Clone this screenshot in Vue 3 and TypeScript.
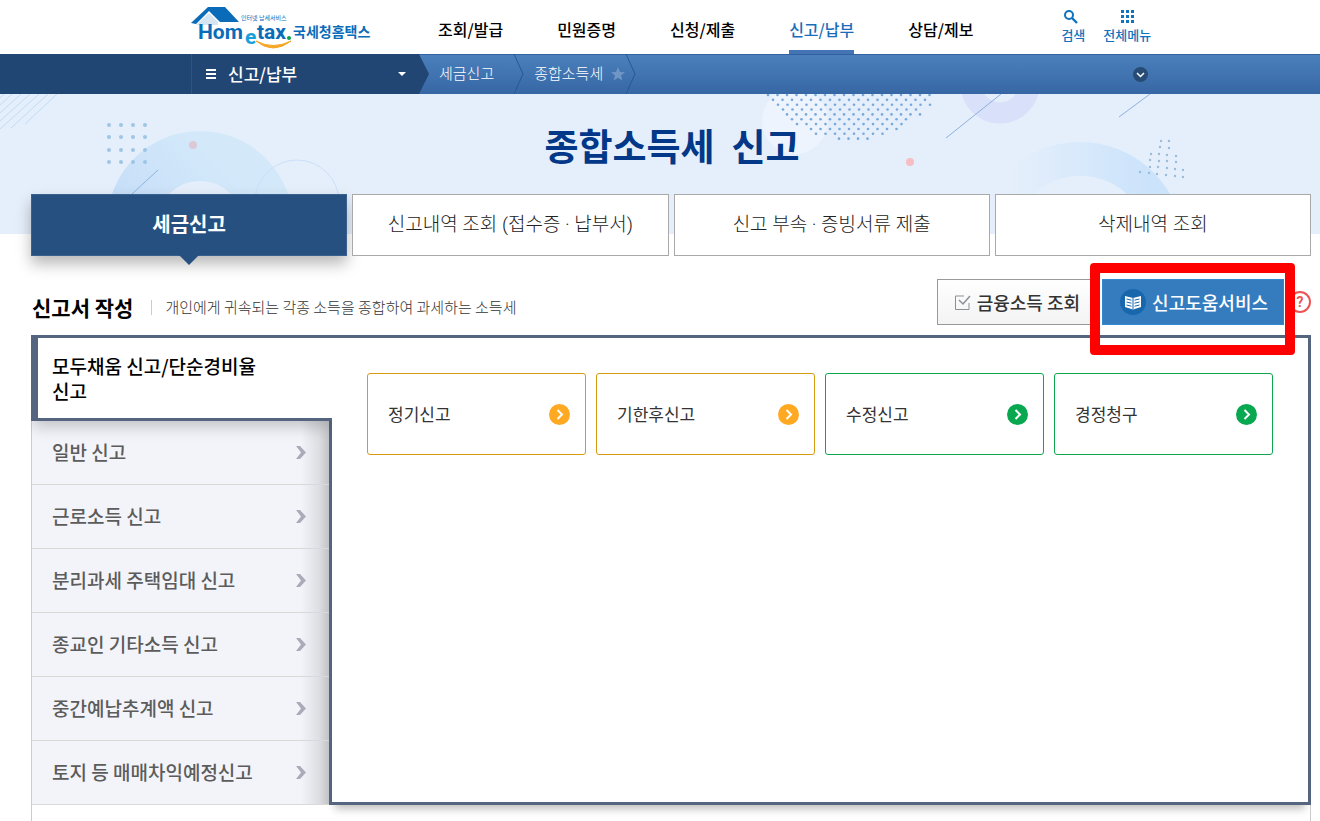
<script setup lang="ts">
interface Card {
  label: string
  tone: 'amber' | 'green'
}

interface Dot {
  x: number
  y: number
}

const menus: string[] = ['조회/발급', '민원증명', '신청/제출', '신고/납부', '상담/제보']
const activeMenu = '신고/납부'

const tabs: string[] = ['세금신고', '신고내역 조회 (접수증 · 납부서)', '신고 부속 · 증빙서류 제출', '삭제내역 조회']

const sideItems: string[] = [
  '일반 신고',
  '근로소득 신고',
  '분리과세 주택임대 신고',
  '종교인 기타소득 신고',
  '중간예납추계액 신고',
  '토지 등 매매차익예정신고',
]

const cards: Card[] = [
  { label: '정기신고', tone: 'amber' },
  { label: '기한후신고', tone: 'amber' },
  { label: '수정신고', tone: 'green' },
  { label: '경정청구', tone: 'green' },
]

const gridDots: Dot[] = []
for (const y of [31, 43, 56, 68]) {
  for (const x of [109, 121, 133, 145]) gridDots.push({ x, y })
}

// Each row of the halftone triangle: first and last dot position.
const halftoneRows: [number, number][] = [
  [768, 930], [773, 926], [778, 930], [783, 925], [787, 920],
  [792, 911], [797, 907], [811, 897], [816, 883], [839, 869],
]
const halftone: Dot[] = halftoneRows.flatMap(([from, to], row) => {
  const out: Dot[] = []
  for (let x = from; x <= to; x += 9.5) out.push({ x, y: 1 + row * 4.85 })
  return out
})

const spray: Dot[] = [
  [1161, 47], [1169, 47], [1160, 53], [1169, 54], [1151, 60], [1159, 60], [1167, 61], [1176, 62],
  [1150, 66], [1159, 67], [1167, 67], [1176, 68], [1150, 73], [1158, 73], [1167, 74], [1175, 75],
  [1183, 76], [1140, 78], [1149, 79], [1157, 80], [1166, 81], [1175, 82], [1183, 83],
].map(([x, y]) => ({ x, y }))
</script>

<template>
  <div class="page">
    <header class="top">
      <a class="logo" href="#" aria-label="Hometax 국세청홈택스">
        <svg width="182" height="52" viewBox="0 0 182 52">
          <path d="M5 25L18 13L27 22V25Z" fill="#d5e6f2" />
          <path d="M0 23L17 7H34L48 22H29L18 11L5 24Z" fill="#0a6cb8" />
          <text class="brand" y="39"><tspan x="7">Hom</tspan><tspan class="small-e" x="54" y="44">e</tspan><tspan x="66" y="39">tax</tspan></text>
          <circle cx="98" cy="38" r="2" fill="#0ba14b" />
          <path d="M65 41Q82 55 100 41Q82 50 65 41Z" fill="#f5a623" stroke="#f5a623" stroke-width="1" />
          <text class="tagline" x="50" y="20">인터넷 납세서비스</text>
          <text class="korean" x="102" y="37">국세청홈택스</text>
        </svg>
      </a>
      <nav class="menus">
        <a v-for="m in menus" :key="m" href="#" :class="{ on: m === activeMenu }">{{ m }}</a>
      </nav>
      <div class="tools">
        <button type="button">
          <svg width="20" height="16" viewBox="0 0 20 16" fill="none" stroke="#0f73bd">
            <circle cx="6" cy="6" r="4" stroke-width="2" />
            <path d="M9 9L14 14" stroke-width="2.4" />
          </svg>
          검색
        </button>
        <button type="button">
          <svg width="16" height="16" viewBox="0 0 16 16" fill="#0f73bd">
            <template v-for="r in 3" :key="r">
              <rect v-for="c in 3" :key="c" :x="c * 5 - 3" :y="r * 5 - 4" width="3" height="3" />
            </template>
          </svg>
          전체메뉴
        </button>
      </div>
    </header>

    <div class="bar">
      <button type="button" class="section">
        <svg width="10" height="12" viewBox="0 0 10 12" fill="#fff">
          <path d="M0 1h10v2H0zM0 5h10v2H0zM0 9h10v2H0z" />
        </svg>
        <span>신고/납부</span>
        <svg width="8" height="4" viewBox="0 0 8 4"><path d="M0 0h8L4 4z" fill="#fff" /></svg>
      </button>
      <a class="crumb" href="#">세금신고</a>
      <svg class="sep" width="12" height="40" viewBox="0 0 12 40"><path d="M1 0L10 20L1 40" /></svg>
      <a class="crumb" href="#">종합소득세</a>
      <svg class="star" width="14" height="14" viewBox="0 0 14 14">
        <path d="M7 0L9 5L14 5.300L10 8.500L11.400 13.500L7 10.700L2.600 13.500L4 8.500L0 5.300L5 5Z" fill="#7096c6" />
      </svg>
      <svg class="sep" width="12" height="40" viewBox="0 0 12 40"><path d="M1 0L10 20L1 40" /></svg>
      <button type="button" class="expand" aria-label="펼치기">
        <svg width="15" height="15" viewBox="0 0 15 15">
          <circle cx="7.500" cy="7.500" r="7.500" fill="#284b76" />
          <path d="M4 6L7.500 9.500L11 6" fill="none" stroke="#fff" stroke-width="1.500" />
        </svg>
      </button>
    </div>

    <section class="banner">
      <svg class="art" width="1320" height="140" viewBox="0 0 1320 140" aria-hidden="true">
        <defs>
          <linearGradient id="ringLeft" x1="0" y1="0.600" x2="0.600" y2="0">
            <stop offset="0" stop-color="#c4dcf8" />
            <stop offset="1" stop-color="#d3e9fa" />
          </linearGradient>
          <linearGradient id="ringRight" x1="0" y1="0" x2="1" y2="0">
            <stop offset="0.100" stop-color="#cbe3fb" stop-opacity="0" />
            <stop offset="0.900" stop-color="#cbe3fb" />
          </linearGradient>
        </defs>
        <path d="M57 0L25 30M48 0L11 34M39 0L0 35M30 0L0 27M21 0L0 19M12 0L0 11M4 0L0 4" stroke="#bedcf5" fill="none" />
        <circle cx="200" cy="130" r="68" fill="none" stroke="url(#ringLeft)" stroke-width="50" />
        <circle v-for="(d, i) in gridDots" :key="'g' + i" :cx="d.x" :cy="d.y" r="2" fill="#9dc6e4" />
        <circle cx="193" cy="51" r="4" fill="#dcc8d6" />
        <path d="M132 100L158 76" stroke="#8cb5e2" />
        <circle cx="297" cy="108" r="42" fill="none" stroke="#cbdff8" />
        <circle cx="795" cy="27" r="33" fill="#edf4fd" />
        <circle v-for="(d, i) in halftone" :key="'h' + i" :cx="d.x" :cy="d.y" r="1.300" fill="#79a8da" />
        <circle cx="1000" cy="-10" r="29" fill="none" stroke="#d9e0f9" stroke-width="21" />
        <path d="M946 44L1001 0M1119 23L1150 0" stroke="#8bb1e2" />
        <circle cx="910" cy="68" r="4" fill="#f6bdc2" />
        <circle cx="1080" cy="152" r="87" fill="none" stroke="url(#ringRight)" stroke-width="34" />
        <circle v-for="(d, i) in spray" :key="'s' + i" :cx="d.x" :cy="d.y" r="1.200" fill="#9abbdc" />
      </svg>
      <h1>종합소득세&nbsp; 신고</h1>
    </section>

    <main>
      <nav class="tabs">
        <a v-for="(t, i) in tabs" :key="t" href="#" :class="{ on: i === 0 }">{{ t }}</a>
      </nav>

      <div class="heading">
        <h2>신고서 작성</h2>
        <p>개인에게 귀속되는 각종 소득을 종합하여 과세하는 소득세</p>
        <div class="actions">
          <button type="button" class="income">
            <svg width="17" height="17" viewBox="0 0 17 17" fill="none" stroke="#8b8f98">
              <path d="M10 2H1.500V15.500H15V9" />
              <path d="M5 6L9 10L16 2" stroke-width="1.500" />
            </svg>
            금융소득 조회
          </button>
          <div class="marked">
            <button type="button" class="assist">
              <svg width="26" height="26" viewBox="0 0 26 26">
                <circle cx="13" cy="13" r="13" fill="#1867ad" />
                <path d="M5 7L13 9L21 7V18L13 20.500L5 18Z" fill="#fff" />
                <path d="M13 9V20M6.500 10L11.500 11.200M6.500 13L11.500 14.200M6.500 16L11.500 17.200M19.500 10L14.500 11.200M19.500 13L14.500 14.200M19.500 16L14.500 17.200" stroke="#1867ad" fill="none" />
              </svg>
              신고도움서비스
            </button>
          </div>
          <button type="button" class="help" aria-label="도움말">?</button>
        </div>
      </div>

      <div class="board">
        <nav class="side">
          <a class="current" href="#">모두채움 신고/단순경비율 신고</a>
          <a v-for="s in sideItems" :key="s" class="item" href="#">
            <span>{{ s }}</span>
            <svg width="12" height="13" viewBox="0 0 12 13">
              <path d="M1 0H5L11 6.500L5 13H1L6 6.500Z" fill="#a9abb9" />
            </svg>
          </a>
        </nav>
        <section class="panel">
          <a v-for="c in cards" :key="c.label" href="#" class="card" :class="c.tone">
            <span>{{ c.label }}</span>
            <svg width="21" height="21" viewBox="0 0 21 21">
              <circle cx="10.500" cy="10.500" r="10.500" fill="currentColor" />
              <path d="M8.500 6L13 10.500L8.500 15" fill="none" stroke="#fff" stroke-width="2" />
            </svg>
          </a>
        </section>
      </div>
      <div class="tail"></div>
    </main>
  </div>
</template>

<style>
body {
  margin: 0;
  background: #fff;
}
</style>

<style scoped>
.page {
  display: flex;
  flex-direction: column;
  min-height: 100vh;
  overflow: hidden;
  font-family: "Noto Sans CJK KR", "Noto Sans", sans-serif;
  color: #000;
}

a {
  color: inherit;
  text-decoration: none;
}

button {
  padding: 0;
  border: 0;
  background: none;
  font-family: inherit;
  cursor: pointer;
}

svg {
  display: block;
  flex: none;
}

/* Top navigation */
.top {
  display: flex;
  height: 54px;
  padding-left: 191px;
}

.logo {
  width: 247px;
}

.brand {
  font-family: Roboto, sans-serif;
  font-size: 21px;
  font-weight: 700;
  fill: #0a6cb8;
}

.small-e {
  fill: #16a0dd;
}

.tagline {
  font-size: 6px;
  fill: #0a6cb8;
}

.korean {
  font-size: 14px;
  font-weight: 700;
  fill: #0a6cb8;
}

.menus {
  display: flex;
  gap: 54px;
}

.menus a {
  height: 50px;
  font-size: 16px;
  font-weight: 500;
  line-height: 58px;
  white-space: nowrap;
}

.menus .on {
  color: #1b6dba;
  border-bottom: 4px solid #4474b3;
}

.tools {
  display: flex;
  gap: 18px;
  margin-left: 88px;
}

.tools button {
  display: flex;
  flex-direction: column;
  align-items: center;
  padding-top: 9px;
  color: #0f73bd;
  font-size: 13px;
  font-weight: 500;
  line-height: 20px;
}

/* Location bar */
.bar {
  display: flex;
  align-items: center;
  height: 40px;
  padding-left: 191px;
  background: linear-gradient(90deg, #204673 191px, transparent 191px), linear-gradient(#31619e 1px, #4b80bd 1px, #3667a4);
}

.section {
  display: flex;
  align-items: center;
  width: 238px;
  height: 40px;
  margin-right: 10px;
  padding: 0 23px 0 14px;
  border-left: 1px solid #2b5587;
  background: #214674;
  clip-path: polygon(0 0, 228px 0, 100% 50%, 228px 100%, 0 100%);
  color: #fff;
  font-size: 17px;
  font-weight: 500;
}

.section span {
  flex: 1;
  margin-left: 12px;
  padding-bottom: 2px;
  text-align: left;
}

.crumb {
  padding-bottom: 2px;
  color: #fff;
  font-size: 15px;
  font-weight: 300;
  line-height: 36px;
}

.sep {
  margin: 0 9px 0 19px;
  fill: none;
  stroke: #235a96;
}

.star {
  margin-left: 8px;
}

.star + .sep {
  margin-left: 0;
}

.expand {
  margin: 0 172px 0 auto;
}

/* Banner */
.banner {
  position: relative;
  height: 140px;
  background: #e5effb;
  overflow: hidden;
}

.art {
  position: absolute;
  top: 0;
  left: 0;
}

h1 {
  position: relative;
  margin: 0;
  padding: 23px 0 0 24px;
  color: #023887;
  font-size: 37px;
  font-weight: 700;
  line-height: 56px;
  text-align: center;
}

/* Main column */
main {
  position: relative;
  display: flex;
  flex: 1;
  flex-direction: column;
  margin: -40px 9px 0 31px;
}

.tabs {
  display: grid;
  grid-template-columns: repeat(4, 1fr);
  gap: 5px;
}

.tabs a {
  position: relative;
  height: 60px;
  border: 1px solid #a9a9a9;
  background: #fff;
  color: #222;
  font-family: Roboto, "Noto Sans CJK KR", sans-serif;
  font-size: 19px;
  font-weight: 300;
  line-height: 60px;
  text-align: center;
}

.tabs .on {
  border-color: #3a618d;
  background: #265080;
  box-shadow: 0 8px 14px rgba(0, 0, 0, 0.28);
  color: #fff;
  font-size: 20px;
  font-weight: 700;
}

.tabs .on::after {
  content: "";
  position: absolute;
  top: 60px;
  left: calc(50% - 10px);
  border: 10px solid transparent;
  border-top-color: #265080;
  border-bottom: 0;
}

.heading {
  display: flex;
  align-items: center;
  margin: 23px 0 10px;
}

h2 {
  margin: 10px 0 0 1px;
  font-size: 21px;
  font-weight: 700;
  line-height: 30px;
}

.heading p {
  margin: 10px 0 0 18px;
  padding-left: 14px;
  background: linear-gradient(#ccc, #ccc) 0 50% / 1px 15px no-repeat;
  color: #333;
  font-size: 15px;
  font-weight: 300;
  line-height: 30px;
}

.actions {
  display: flex;
  align-items: center;
  gap: 5px;
  margin-left: auto;
}

.actions button {
  display: flex;
  align-items: center;
  white-space: nowrap;
}

.income,
.assist {
  height: 46px;
  font-size: 18px;
  font-weight: 500;
}

.income {
  gap: 6px;
  padding: 0 16px;
  border: 1px solid #999;
  background: linear-gradient(#fff, #f3f3f3);
  color: #333;
}

.assist {
  gap: 6px;
  padding: 0 15px 0 17px;
  border: 1px solid #3488cd;
  background: #357cbf;
  color: #fff;
}

.marked {
  position: relative;
  z-index: 2;
}

.marked::after {
  content: "";
  position: absolute;
  inset: -16px -11px -30px -12px;
  border: 10px solid #f00;
  border-radius: 4px;
  pointer-events: none;
}

.help {
  justify-content: center;
  width: 22px;
  height: 22px;
  border: 2px solid #ee5353;
  border-radius: 50%;
  color: #ee5353;
  font: 700 14px Roboto, sans-serif;
}

.board {
  display: flex;
}

.side {
  position: relative;
  z-index: 1;
  display: flex;
  flex-direction: column;
  width: 301px;
  margin-right: -3px;
}

.current {
  position: relative;
  padding: 15px 40px 15px 14px;
  border: 3px solid #56657f;
  border-width: 3px 0 3px 7px;
  background: #fff;
  box-shadow: 0 8px 14px -2px rgba(0, 0, 0, 0.2);
  clip-path: inset(0 0 -30px 0);
  z-index: 1;
  font-size: 19px;
  font-weight: 500;
  line-height: 25px;
  word-break: keep-all;
}

.item {
  display: flex;
  align-items: center;
  justify-content: space-between;
  height: 63px;
  margin-right: 3px;
  padding: 0 22px 0 20px;
  border-bottom: 1px solid #d9d9d9;
  border-left: 1px solid #ccc;
  background: linear-gradient(270deg, #c2c3c6, #dddee2 10px, #f3f4fa 28px);
  color: #5c5c5c;
  font-size: 19px;
  font-weight: 500;
}

.item span,
.card span {
  padding-bottom: 2px;
}

.panel {
  display: grid;
  flex: 1;
  grid-template-columns: repeat(4, 1fr);
  align-content: start;
  gap: 10px;
  padding: 35px 35px 0;
  border: 3px solid #56657f;
  box-shadow: 0 10px 8px -6px rgba(0, 0, 0, 0.25);
}

.card {
  display: flex;
  align-items: center;
  justify-content: space-between;
  height: 80px;
  padding: 0 15px 0 20px;
  border: 1px solid currentColor;
  border-radius: 3px;
  font-size: 17px;
  font-weight: 400;
  color: #333;
}

.card.amber {
  border-color: #d69a13;
}

.card.green {
  border-color: #0fa650;
}

.amber svg {
  color: #ffa922;
}

.green svg {
  color: #07a84f;
}

.tail {
  flex: 1;
  border: 1px solid #ccc;
  border-width: 0 1px;
}
</style>
